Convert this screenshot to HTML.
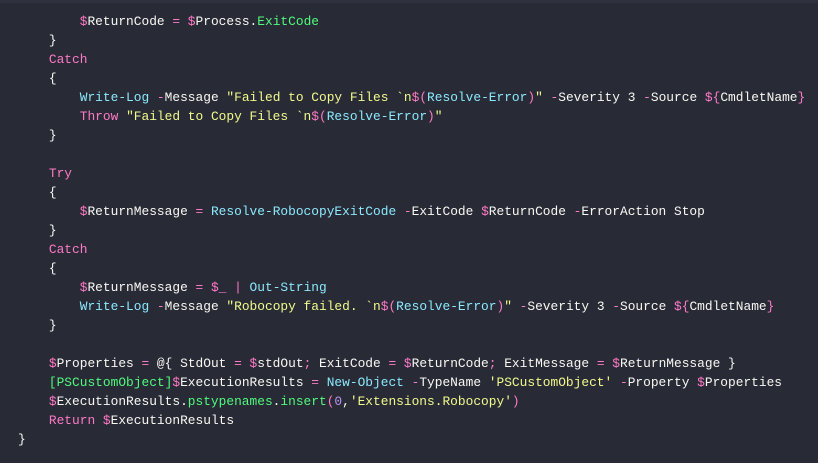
<!DOCTYPE html>
<html><head><meta charset="utf-8"><style>
html,body{margin:0;padding:0;background:#282a36;width:818px;height:463px;overflow:hidden}
.top{position:absolute;left:0;top:0;width:818px;height:3px;background:#2f313e}
pre{position:absolute;left:18px;top:12px;margin:0;font-family:"Liberation Mono",monospace;font-size:12.86px;line-height:19px;color:#f8f8f2;white-space:pre}
.p{color:#ff79c6}.g{color:#50fa7b}.y{color:#f1fa8c}.c{color:#8be9fd}.n{color:#bd93f9}
</style></head><body><div class="top"></div>
<pre>        <span class="p">$</span>ReturnCode <span class="p">=</span> <span class="p">$</span>Process.<span class="g">ExitCode</span>
    }
    <span class="p">Catch</span>
    {
        <span class="c">Write-Log</span> <span class="p">-</span>Message <span class="y">"Failed to Copy Files `n</span><span class="p">$(</span><span class="c">Resolve-Error</span><span class="p">)</span><span class="y">"</span> <span class="p">-</span>Severity 3 <span class="p">-</span>Source <span class="p">${</span>CmdletName<span class="p">}</span>
        <span class="p">Throw</span> <span class="y">"Failed to Copy Files `n</span><span class="p">$(</span><span class="c">Resolve-Error</span><span class="p">)</span><span class="y">"</span>
    }

    <span class="p">Try</span>
    {
        <span class="p">$</span>ReturnMessage <span class="p">=</span> <span class="c">Resolve-RobocopyExitCode</span> <span class="p">-</span>ExitCode <span class="p">$</span>ReturnCode <span class="p">-</span>ErrorAction Stop
    }
    <span class="p">Catch</span>
    {
        <span class="p">$</span>ReturnMessage <span class="p">=</span> <span class="p">$_</span> <span class="p">|</span> <span class="c">Out-String</span>
        <span class="c">Write-Log</span> <span class="p">-</span>Message <span class="y">"Robocopy failed. `n</span><span class="p">$(</span><span class="c">Resolve-Error</span><span class="p">)</span><span class="y">"</span> <span class="p">-</span>Severity 3 <span class="p">-</span>Source <span class="p">${</span>CmdletName<span class="p">}</span>
    }

    <span class="p">$</span>Properties <span class="p">=</span> @{ StdOut <span class="p">=</span> <span class="p">$</span>stdOut<span class="p">;</span> ExitCode <span class="p">=</span> <span class="p">$</span>ReturnCode<span class="p">;</span> ExitMessage <span class="p">=</span> <span class="p">$</span>ReturnMessage }
    <span class="g">[PSCustomObject]</span><span class="p">$</span>ExecutionResults <span class="p">=</span> <span class="c">New-Object</span> <span class="p">-</span>TypeName <span class="y">'PSCustomObject'</span> <span class="p">-</span>Property <span class="p">$</span>Properties
    <span class="p">$</span>ExecutionResults.<span class="g">pstypenames</span>.<span class="g">insert</span><span class="p">(</span><span class="n">0</span>,<span class="y">'Extensions.Robocopy'</span><span class="p">)</span>
    <span class="p">Return</span> <span class="p">$</span>ExecutionResults
}</pre>
</body></html>
